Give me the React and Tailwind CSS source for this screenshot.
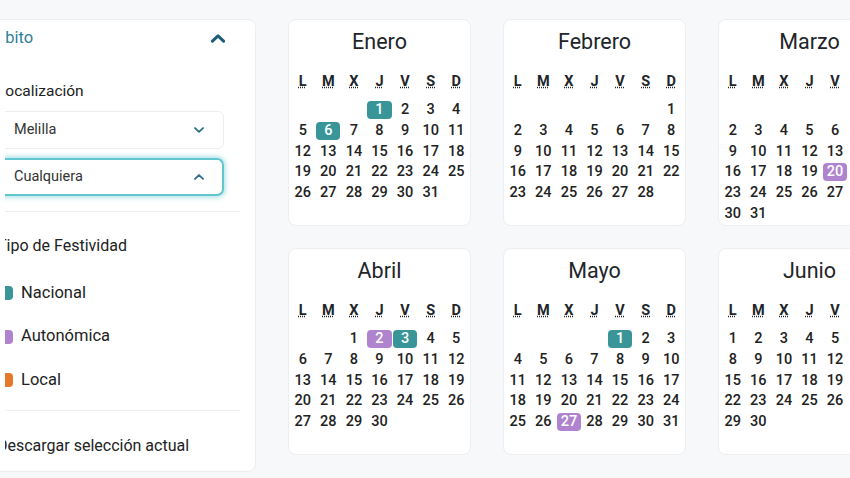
import React from "react";

const MONTHS = [
  { name: "Enero", start: 3, days: 31, hol: { 1: "n", 6: "n" } },
  { name: "Febrero", start: 6, days: 28, hol: {} },
  { name: "Marzo", start: 6, days: 31, hol: { 20: "a" } },
  { name: "Abril", start: 2, days: 30, hol: { 2: "a", 3: "n" } },
  { name: "Mayo", start: 4, days: 31, hol: { 1: "n", 27: "a" } },
  { name: "Junio", start: 0, days: 30, hol: {} },
];

const WEEK = [
  ["L", "Lunes"],
  ["M", "Martes"],
  ["X", "Miércoles"],
  ["J", "Jueves"],
  ["V", "Viernes"],
  ["S", "Sábado"],
  ["D", "Domingo"],
];

function Chevron({ up, className, sw = 2 }) {
  return (
    <svg viewBox="0 0 12 7" className={className} fill="none">
      <polyline
        points={up ? "1.2,5.8 6,1.2 10.8,5.8" : "1.2,1.2 6,5.8 10.8,1.2"}
        stroke="currentColor"
        strokeWidth={sw}
        strokeLinecap="round"
        strokeLinejoin="round"
      />
    </svg>
  );
}

function Month({ m }) {
  const cells = [];
  for (let i = 0; i < m.start; i++) cells.push(null);
  for (let d = 1; d <= m.days; d++) cells.push(d);
  return (
    <div className="w-[183px] h-[207px] shrink-0 bg-white border border-[#eceef1] rounded-[8px] px-[1px] pt-[8px]">
      <div className="h-[28px] leading-[28px] text-center text-[21.5px] text-[#212529]">{m.name}</div>
      <div className="grid grid-cols-7 mt-[16px] h-[18px]">
        {WEEK.map(([l, t]) => (
          <div key={l} className="flex justify-center items-center">
            <abbr title={t} className="text-[14.5px] font-bold text-[#212529] leading-[17px] underline decoration-dotted">
              {l}
            </abbr>
          </div>
        ))}
      </div>
      <div className="grid grid-cols-7 mt-[11px] gap-y-[2.8px]">
        {cells.map((d, i) => {
          const h = d ? m.hol[d] : null;
          const bg = h === "n" ? "bg-[#3a9599] text-white" : h === "a" ? "bg-[#b083cf] text-white" : "text-[#222]";
          return (
            <div key={i} className="px-[0.7px]">
              <div className={`h-[18px] leading-[18px] text-center text-[14.5px] font-medium rounded-[4px] ${d ? bg : ""}`}>
                {d || ""}
              </div>
            </div>
          );
        })}
      </div>
    </div>
  );
}

function Legend({ color, label }) {
  return (
    <div className="flex items-center h-[24px]">
      <span className={`w-[16px] h-[14px] rounded-[4px] shrink-0 ${color}`} />
      <span className="ml-[8px] text-[16.5px] text-[#222]">{label}</span>
    </div>
  );
}

export default function App() {
  return (
    <div
      className="w-[850px] h-[478px] overflow-hidden bg-[#f7f8fa] flex pt-[19px]"
      style={{ fontFamily: "Roboto, 'Noto Sans', sans-serif" }}
    >
      <div className="w-[256px] h-[453px] shrink-0 bg-white border border-l-0 border-[#eceef1] rounded-tr-[8px] rounded-br-[8px]">
        <div className="ml-[5px] h-full overflow-hidden">
          <div className="-ml-[8px] w-[243px]">
            <div className="-ml-[17px] h-[36px] flex items-center">
              <span className="text-[16.5px] text-[#2f7f99] whitespace-nowrap">Ámbito</span>
              <Chevron up sw={2.6} className="ml-auto mr-[15px] w-[14px] h-[9px] text-[#1e5d78]" />
            </div>
            <div className="mt-[25px] h-[20px] leading-[20px] text-[15.5px] text-[#222] whitespace-nowrap">Localización</div>
            <div className="mt-[10px] w-[227px] h-[38px] bg-white border border-[#eceef1] rounded-[6px] flex items-center pl-[16px] pr-[19px]">
              <span className="text-[14.5px] text-[#333]">Melilla</span>
              <Chevron sw={2.2} className="ml-auto w-[10px] h-[6px] text-[#2f6d8a]" />
            </div>
            <div className="mt-[9px] w-[227px] h-[38px] bg-white border-2 border-[#62c6d0] rounded-[7px] shadow-[0_0_4px_2px_rgba(98,198,208,0.45)] flex items-center pl-[15px] pr-[18px]">
              <span className="text-[14.5px] text-[#333]">Cualquiera</span>
              <Chevron up sw={2.2} className="ml-auto w-[10px] h-[6px] text-[#2f6d8a]" />
            </div>
            <div className="mt-[15px] h-px bg-[#eceef1]" />
            <div className="mt-[23px] h-[22px] leading-[22px] text-[16px] text-[#222] whitespace-nowrap">Tipo de Festividad</div>
            <div className="mt-[24px] flex flex-col gap-[19.5px]">
              <Legend color="bg-[#3a9599]" label="Nacional" />
              <Legend color="bg-[#b083cf]" label="Autonómica" />
              <Legend color="bg-[#e5782a]" label="Local" />
            </div>
            <div className="mt-[18px] h-px bg-[#eceef1]" />
            <div className="mt-[24px] h-[22px] leading-[22px] text-[16px] text-[#222] whitespace-nowrap">Descargar selección actual</div>
          </div>
        </div>
      </div>
      <div className="ml-[32px] shrink-0 grid grid-cols-[183px_183px_183px] gap-x-[32px] gap-y-[22px] content-start">
        {MONTHS.map((m) => (
          <Month key={m.name} m={m} />
        ))}
      </div>
    </div>
  );
}
